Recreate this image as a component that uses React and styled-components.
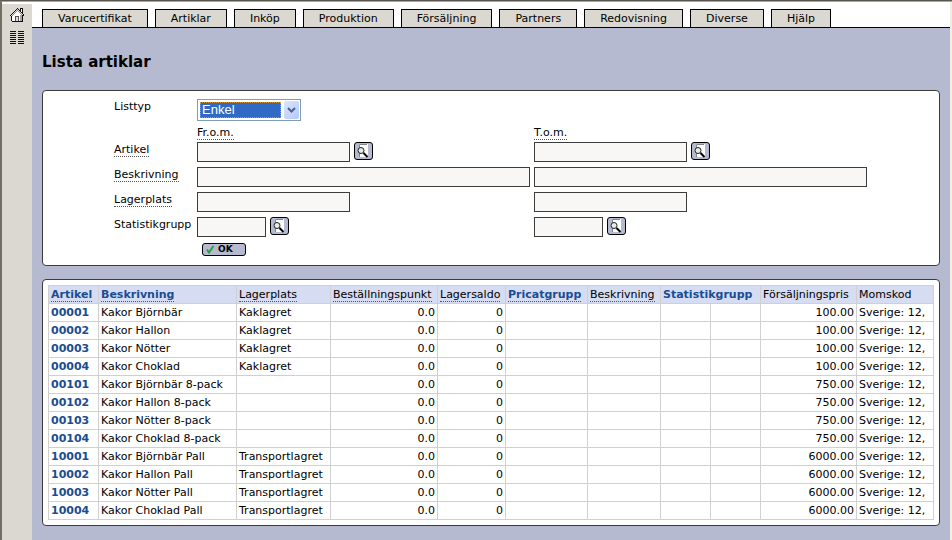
import React, { useState } from "react";
import styled, { createGlobalStyle } from "styled-components";

const colors = {
  page: "#b5bad0",
  chrome: "#dbd8d1",
  panel: "#ffffff",
  panelBorder: "#3c3c3c",
  field: "#f8f7f6",
  headerRow: "#d6dcf1",
  gridLine: "#d0d0d0",
  link: "#1a4d92",
  highlight: "#316ac5",
};

const GlobalStyle = createGlobalStyle`
  * {
    box-sizing: border-box;
  }

  body {
    margin: 0;
    background: ${colors.page};
    color: #000;
    font-family: "DejaVu Sans", Verdana, sans-serif;
    font-size: 11px;
    line-height: 13px;
  }
`;

const Frame = styled.div`
  display: flex;
  min-height: 100vh;
  border: solid #716f64;
  border-width: 2px 0 0 2px;
  border-top-style: groove;
  border-top-color: #aca899;
`;

const Sidebar = styled.aside`
  display: flex;
  flex-direction: column;
  align-items: center;
  gap: 7px;
  flex: 0 0 30px;
  padding-top: 3px;
  border-top: 2px solid #fff;
  background: ${colors.chrome};
`;

const SideLink = styled.a`
  display: block;
  height: 16px;
`;

const Main = styled.main`
  flex: 1;
  min-width: 0;
  border-right: 2px solid #f1efe2;
  background: ${colors.page};
`;

const TabBar = styled.nav`
  display: flex;
  gap: 7px;
  padding: 7px 10px 0;
  border-bottom: 1px solid #000;
  background: #fff;
`;

const Tab = styled.a`
  height: 18px;
  padding: 2px 15px 0;
  border: 1px solid #000;
  border-bottom: 0;
  background: ${colors.chrome};
  color: #000;
  text-decoration: none;
  white-space: nowrap;
`;

const Content = styled.div`
  display: flex;
  flex-direction: column;
  gap: 13px;
  padding: 24px 10px 14px;
`;

const Title = styled.h1`
  margin: 0 0 4px;
  font-size: 15px;
  line-height: 21px;
`;

const Panel = styled.section`
  padding: ${({ $padding }) => $padding};
  border: 1px solid ${colors.panelBorder};
  border-radius: 4px;
  background: ${colors.panel};
`;

const FilterForm = styled.form`
  display: grid;
  grid-template-columns: 79px 333px 333px;
  gap: 5px 4px;
`;

const FieldLabel = styled.label`
  grid-column: 1;
  padding-top: 1px;
`;

const ColumnLabel = styled.span`
  height: 11px;
  grid-column: ${({ $column }) => $column};
`;

const Hint = styled.span`
  border-bottom: 1px dotted #555;
`;

const Field = styled.div`
  display: flex;
  align-items: flex-start;
  gap: 4px;
  grid-column: ${({ $column }) => $column};
`;

const TextInput = styled.input`
  width: ${({ $size }) => ({ small: "69px", medium: "153px", large: "333px" })[$size]};
  height: 20px;
  padding: 0 3px;
  border: 1px solid ${colors.panelBorder};
  border-radius: 0;
  background: ${colors.field};
  font: inherit;
`;

const SelectBox = styled.div`
  display: flex;
  gap: 3px;
  width: 104px;
  height: 22px;
  padding: 1px;
  border: 1px solid #7f9db9;
  background: #fff;
`;

const Select = styled.select`
  flex: 1;
  min-width: 0;
  margin: 1px 0 1px 1px;
  padding: 0 1px;
  appearance: none;
  border: 1px dotted #ce953a;
  border-radius: 0;
  background: ${colors.highlight};
  color: #fff;
  font-family: "Liberation Sans", Arial, sans-serif;
  font-size: 13px;
  line-height: 14px;
  outline: none;
`;

const SelectArrow = styled.span`
  display: flex;
  align-items: center;
  justify-content: center;
  width: 15px;
  border-radius: 2px;
  background: linear-gradient(135deg, #dbe5fe, #b3c8f7);
`;

const SearchButton = styled.button`
  display: flex;
  align-items: center;
  justify-content: center;
  width: 19px;
  height: 18px;
  padding: 0;
  border: 1px solid #000;
  border-radius: 3px;
  background: ${colors.page};
`;

const OkButton = styled.button`
  display: flex;
  align-items: center;
  gap: 4px;
  width: 44px;
  height: 13px;
  margin: 1px 0 0 5px;
  padding: 0 3px;
  border: 1px solid #000;
  border-radius: 3px;
  background: ${colors.page};
  color: #000;
  font-family: inherit;
  font-size: 9px;
  font-weight: bold;
  line-height: 11px;
`;

const Table = styled.table`
  width: 100%;
  table-layout: fixed;
  border-collapse: collapse;
`;

const cellStyles = `
  height: 18px;
  padding: 0 2px;
  border: 1px solid ${colors.gridLine};
  line-height: 13px;
  white-space: nowrap;
`;

const HeaderCell = styled.th`
  ${cellStyles}
  background: ${colors.headerRow};
  font-weight: normal;
  text-align: left;
`;

const Cell = styled.td`
  ${cellStyles}
  text-align: ${({ $numeric }) => ($numeric ? "right" : "left")};
`;

const TableLink = styled.a`
  color: ${colors.link};
  font-weight: bold;
  text-decoration: none;
  border-bottom: ${({ $hint }) => ($hint ? "1px dotted #555" : "0")};
`;

const HomeIcon = () => (
  <svg width="16" height="16" viewBox="0 0 16 16" shapeRendering="crispEdges">
    <path d="M3 8L8 3l5 5v6H3z" fill="#fff" />
    <path d="M11 8h2v6h-2z" fill="#a8a8a8" />
    <path d="M12 2h1v4h-1z" fill="#fff" />
    <path
      d="M1 8h1v1H1zM2 7h1v1H2zM3 6h1v1H3zM4 5h1v1H4zM5 4h1v1H5zM6 3h1v1H6zM7 2h1v1H7zM8 1h1v1H8zM9 2h1v1H9zM10 3h1v1h-1zM11 1h3v1h-3zM11 2h1v3h-1zM13 2h1v5h-1zM12 5h1v1h-1zM14 7h1v2h-1zM2 9h1v5H2zM3 14h11v1H3zM13 8h1v6h-1z"
      fill="#111"
    />
    <path d="M3 8h1v1H3zM4 7h1v1H4zM5 6h1v1H5zM6 5h1v1H6zM7 4h1v1H7zM8 3h1v1H8zM9 4h1v1H9zM10 5h1v1h-1zM11 6h1v1h-1zM12 7h1v1h-1z" fill="#888" />
    <path d="M6 9h4v5H6z" fill="#555" />
    <path d="M7 10h2v4H7z" fill="#ddd" />
  </svg>
);

const ListIcon = () => (
  <svg width="16" height="16" viewBox="0 0 16 16" shapeRendering="crispEdges">
    {[1, 3, 5, 7, 9, 11, 13].map((y) => (
      <path key={y} d={`M1 ${y}h6v1H1zM9 ${y}h6v1H9z`} fill="#111" />
    ))}
  </svg>
);

const SearchIcon = () => (
  <svg width="15" height="16" viewBox="0 0 15 16">
    <path d="M3 1h9v13H3z" fill="#fff" />
    <path d="M3.5 14V1.5H11" fill="none" stroke="#858585" />
    <circle cx="5" cy="7.5" r="3" fill="#e6ebe8" stroke="#222" />
    <path d="M7.5 10l4 4" stroke="#000" strokeWidth="2" />
  </svg>
);

const CheckIcon = () => (
  <svg width="8" height="9" viewBox="0 0 8 9">
    <path d="M1 4.5l2 3L7.5 1" fill="none" stroke="#2f9e41" strokeWidth="2" />
  </svg>
);

const ChevronIcon = () => (
  <svg width="9" height="6" viewBox="0 0 9 6">
    <path d="M1 1l3.5 3.5L8 1" fill="none" stroke="#4d6185" strokeWidth="2" />
  </svg>
);

const tabs = [
  "Varucertifikat",
  "Artiklar",
  "Inköp",
  "Produktion",
  "Försäljning",
  "Partners",
  "Redovisning",
  "Diverse",
  "Hjälp",
];

const filters = [
  { id: "artikel", label: "Artikel", size: "medium", hint: true, search: true },
  { id: "beskrivning", label: "Beskrivning", size: "large", hint: true },
  { id: "lagerplats", label: "Lagerplats", size: "medium", hint: true },
  { id: "statistikgrupp", label: "Statistikgrupp", size: "small", search: true },
];

const columnWidths = [50, 138, 94, 107, 68, 82, 73, 50, 50, 96, 77];

const headers = [
  { label: "Artikel", link: true, hint: true },
  { label: "Beskrivning", link: true, hint: true },
  { label: "Lagerplats", hint: true },
  { label: "Beställningspunkt", hint: true },
  { label: "Lagersaldo", hint: true },
  { label: "Pricatgrupp", link: true, hint: true },
  { label: "Beskrivning", hint: true },
  { label: "Statistikgrupp", link: true, span: 2 },
  { label: "Försäljningspris" },
  { label: "Momskod" },
];

const articles = [
  ["00001", "Kakor Björnbär", "Kaklagret", "100.00"],
  ["00002", "Kakor Hallon", "Kaklagret", "100.00"],
  ["00003", "Kakor Nötter", "Kaklagret", "100.00"],
  ["00004", "Kakor Choklad", "Kaklagret", "100.00"],
  ["00101", "Kakor Björnbär 8-pack", "", "750.00"],
  ["00102", "Kakor Hallon 8-pack", "", "750.00"],
  ["00103", "Kakor Nötter 8-pack", "", "750.00"],
  ["00104", "Kakor Choklad 8-pack", "", "750.00"],
  ["10001", "Kakor Björnbär Pall", "Transportlagret", "6000.00"],
  ["10002", "Kakor Hallon Pall", "Transportlagret", "6000.00"],
  ["10003", "Kakor Nötter Pall", "Transportlagret", "6000.00"],
  ["10004", "Kakor Choklad Pall", "Transportlagret", "6000.00"],
];

const RangeField = ({ filter, side, column }) => (
  <Field $column={column}>
    <TextInput
      id={`${filter.id}-${side}`}
      type="text"
      $size={filter.size}
      aria-label={side === "tom" ? `${filter.label} t.o.m.` : undefined}
    />
    {filter.search && (
      <SearchButton type="button" aria-label={`Sök ${filter.label}`}>
        <SearchIcon />
      </SearchButton>
    )}
  </Field>
);

const ArticleFilter = () => {
  const [listType, setListType] = useState("Enkel");

  return (
    <FilterForm onSubmit={(e) => e.preventDefault()}>
      <FieldLabel htmlFor="listtyp">Listtyp</FieldLabel>
      <SelectBox>
        <Select id="listtyp" value={listType} onChange={(e) => setListType(e.target.value)}>
          <option>Enkel</option>
        </Select>
        <SelectArrow>
          <ChevronIcon />
        </SelectArrow>
      </SelectBox>

      <ColumnLabel $column={2}>
        <Hint>Fr.o.m.</Hint>
      </ColumnLabel>
      <ColumnLabel $column={3}>
        <Hint>T.o.m.</Hint>
      </ColumnLabel>

      {filters.map((filter) => (
        <React.Fragment key={filter.id}>
          <FieldLabel htmlFor={`${filter.id}-from`}>
            {filter.hint ? <Hint>{filter.label}</Hint> : filter.label}
          </FieldLabel>
          <RangeField filter={filter} side="from" column={2} />
          <RangeField filter={filter} side="tom" column={3} />
        </React.Fragment>
      ))}

      <Field $column={2}>
        <OkButton type="submit">
          <CheckIcon />
          OK
        </OkButton>
      </Field>
    </FilterForm>
  );
};

const ArticleTable = () => (
  <Table>
    <colgroup>
      {columnWidths.map((width, i) => (
        <col key={i} style={{ width }} />
      ))}
    </colgroup>
    <thead>
      <tr>
        {headers.map(({ label, link, hint, span }, i) => (
          <HeaderCell key={i} colSpan={span}>
            {link ? (
              <TableLink href="#" $hint={hint}>
                {label}
              </TableLink>
            ) : hint ? (
              <Hint>{label}</Hint>
            ) : (
              label
            )}
          </HeaderCell>
        ))}
      </tr>
    </thead>
    <tbody>
      {articles.map(([number, name, location, price]) => (
        <tr key={number}>
          <Cell>
            <TableLink href="#">{number}</TableLink>
          </Cell>
          <Cell>{name}</Cell>
          <Cell>{location}</Cell>
          <Cell $numeric>0.0</Cell>
          <Cell $numeric>0</Cell>
          <Cell />
          <Cell />
          <Cell />
          <Cell />
          <Cell $numeric>{price}</Cell>
          <Cell>Sverige: 12,</Cell>
        </tr>
      ))}
    </tbody>
  </Table>
);

const App = () => (
  <>
    <GlobalStyle />
    <Frame>
      <Sidebar>
        <SideLink href="#" aria-label="Hem">
          <HomeIcon />
        </SideLink>
        <SideLink href="#" aria-label="Lista">
          <ListIcon />
        </SideLink>
      </Sidebar>
      <Main>
        <TabBar>
          {tabs.map((tab) => (
            <Tab key={tab} href="#">
              {tab}
            </Tab>
          ))}
        </TabBar>
        <Content>
          <Title>Lista artiklar</Title>
          <Panel $padding="8px 8px 9px 71px">
            <ArticleFilter />
          </Panel>
          <Panel $padding="5px">
            <ArticleTable />
          </Panel>
        </Content>
      </Main>
    </Frame>
  </>
);

export default App;
